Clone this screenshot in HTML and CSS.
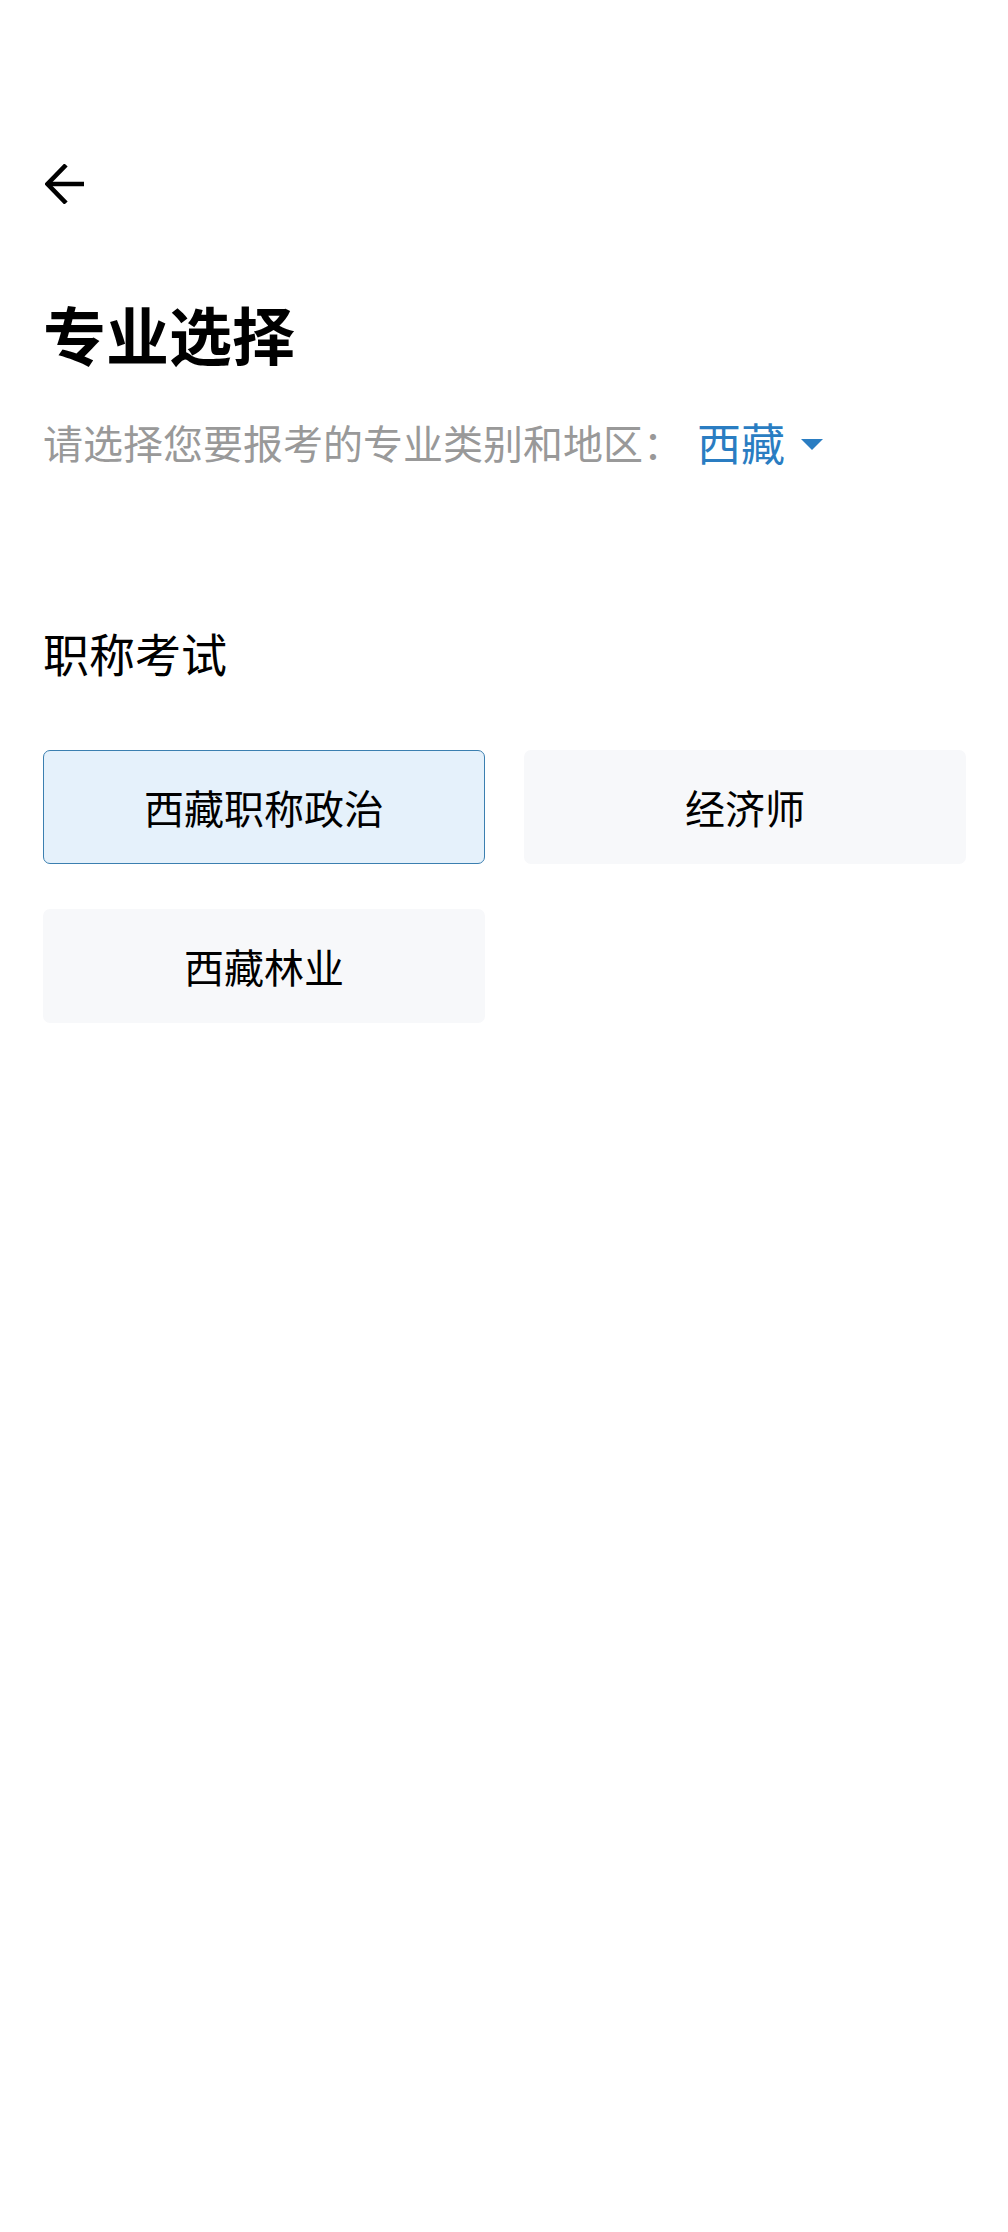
FILE: index.html
```html
<!DOCTYPE html>
<html lang="zh-CN">
<head>
<meta charset="utf-8">
<title>专业选择</title>
<link rel="stylesheet" href="styles.css">
</head>
<body>
<div class="page">
  <header class="topbar">
    <button class="back" aria-label="返回">
      <svg width="40" height="40" viewBox="0 0 40 40" aria-hidden="true">
        <polyline points="21,1 2.5,20 21,39" fill="none" stroke="#000" stroke-width="4.6" stroke-linejoin="miter"/>
        <line x1="2.5" y1="20" x2="39" y2="20" stroke="#000" stroke-width="4.6"/>
      </svg>
    </button>
  </header>

  <h1 class="title">专业选择</h1>

  <div class="subtitle">
    <span class="hint">请选择您要报考的专业类别和地区：</span>
    <span class="region">西藏</span>
    <span class="caret"></span>
  </div>

  <section class="group">
    <h2 class="group-title">职称考试</h2>
    <div class="grid">
      <div class="card active">西藏职称政治</div>
      <div class="card">经济师</div>
      <div class="card">西藏林业</div>
    </div>
  </section>
</div>
</body>
</html>
```

FILE: styles.css
```css
html, body {
  margin: 0;
  padding: 0;
  background: #ffffff;
}

body {
  font-family: "Noto Sans CJK SC", "Noto Sans", sans-serif;
  color: #000;
  width: 1008px;
  min-height: 2232px;
}

.page {
  padding: 0 40px 0 43px;
}

.topbar {
  height: 223px;
  padding-top: 164px;
  box-sizing: border-box;
}

.back {
  display: block;
  width: 40px;
  height: 40px;
  padding: 0;
  margin: 0 0 0 2px;
  border: none;
  background: none;
}

.back svg {
  display: block;
}

.title {
  margin: 78px 0 0 0;
  font-size: 63px;
  line-height: 63px;
  font-weight: 700;
}

.subtitle {
  margin-top: 54px;
  display: flex;
  align-items: center;
  height: 48px;
}

.hint {
  font-size: 40px;
  line-height: 48px;
  color: #999999;
}

.region {
  margin-left: 14px;
  font-size: 44px;
  line-height: 48px;
  color: #2a7dc2;
}

.caret {
  margin-left: 16px;
  margin-top: 4px;
  width: 0;
  height: 0;
  border-left: 11px solid transparent;
  border-right: 11px solid transparent;
  border-top: 11px solid #2a7dc2;
}

.group {
  margin-top: 162px;
}

.group-title {
  margin: 0;
  font-size: 46px;
  line-height: 48px;
  font-weight: 400;
}

.grid {
  margin-top: 74px;
  display: grid;
  grid-template-columns: 442px 442px;
  column-gap: 39px;
  row-gap: 45px;
}

.card {
  height: 114px;
  box-sizing: border-box;
  border-radius: 7px;
  background: #f7f8fa;
  display: flex;
  align-items: center;
  justify-content: center;
  font-size: 40px;
  color: #000;
}

.card.active {
  background: #e5f1fb;
  border: 1.5px solid #3b7fb0;
}
```
